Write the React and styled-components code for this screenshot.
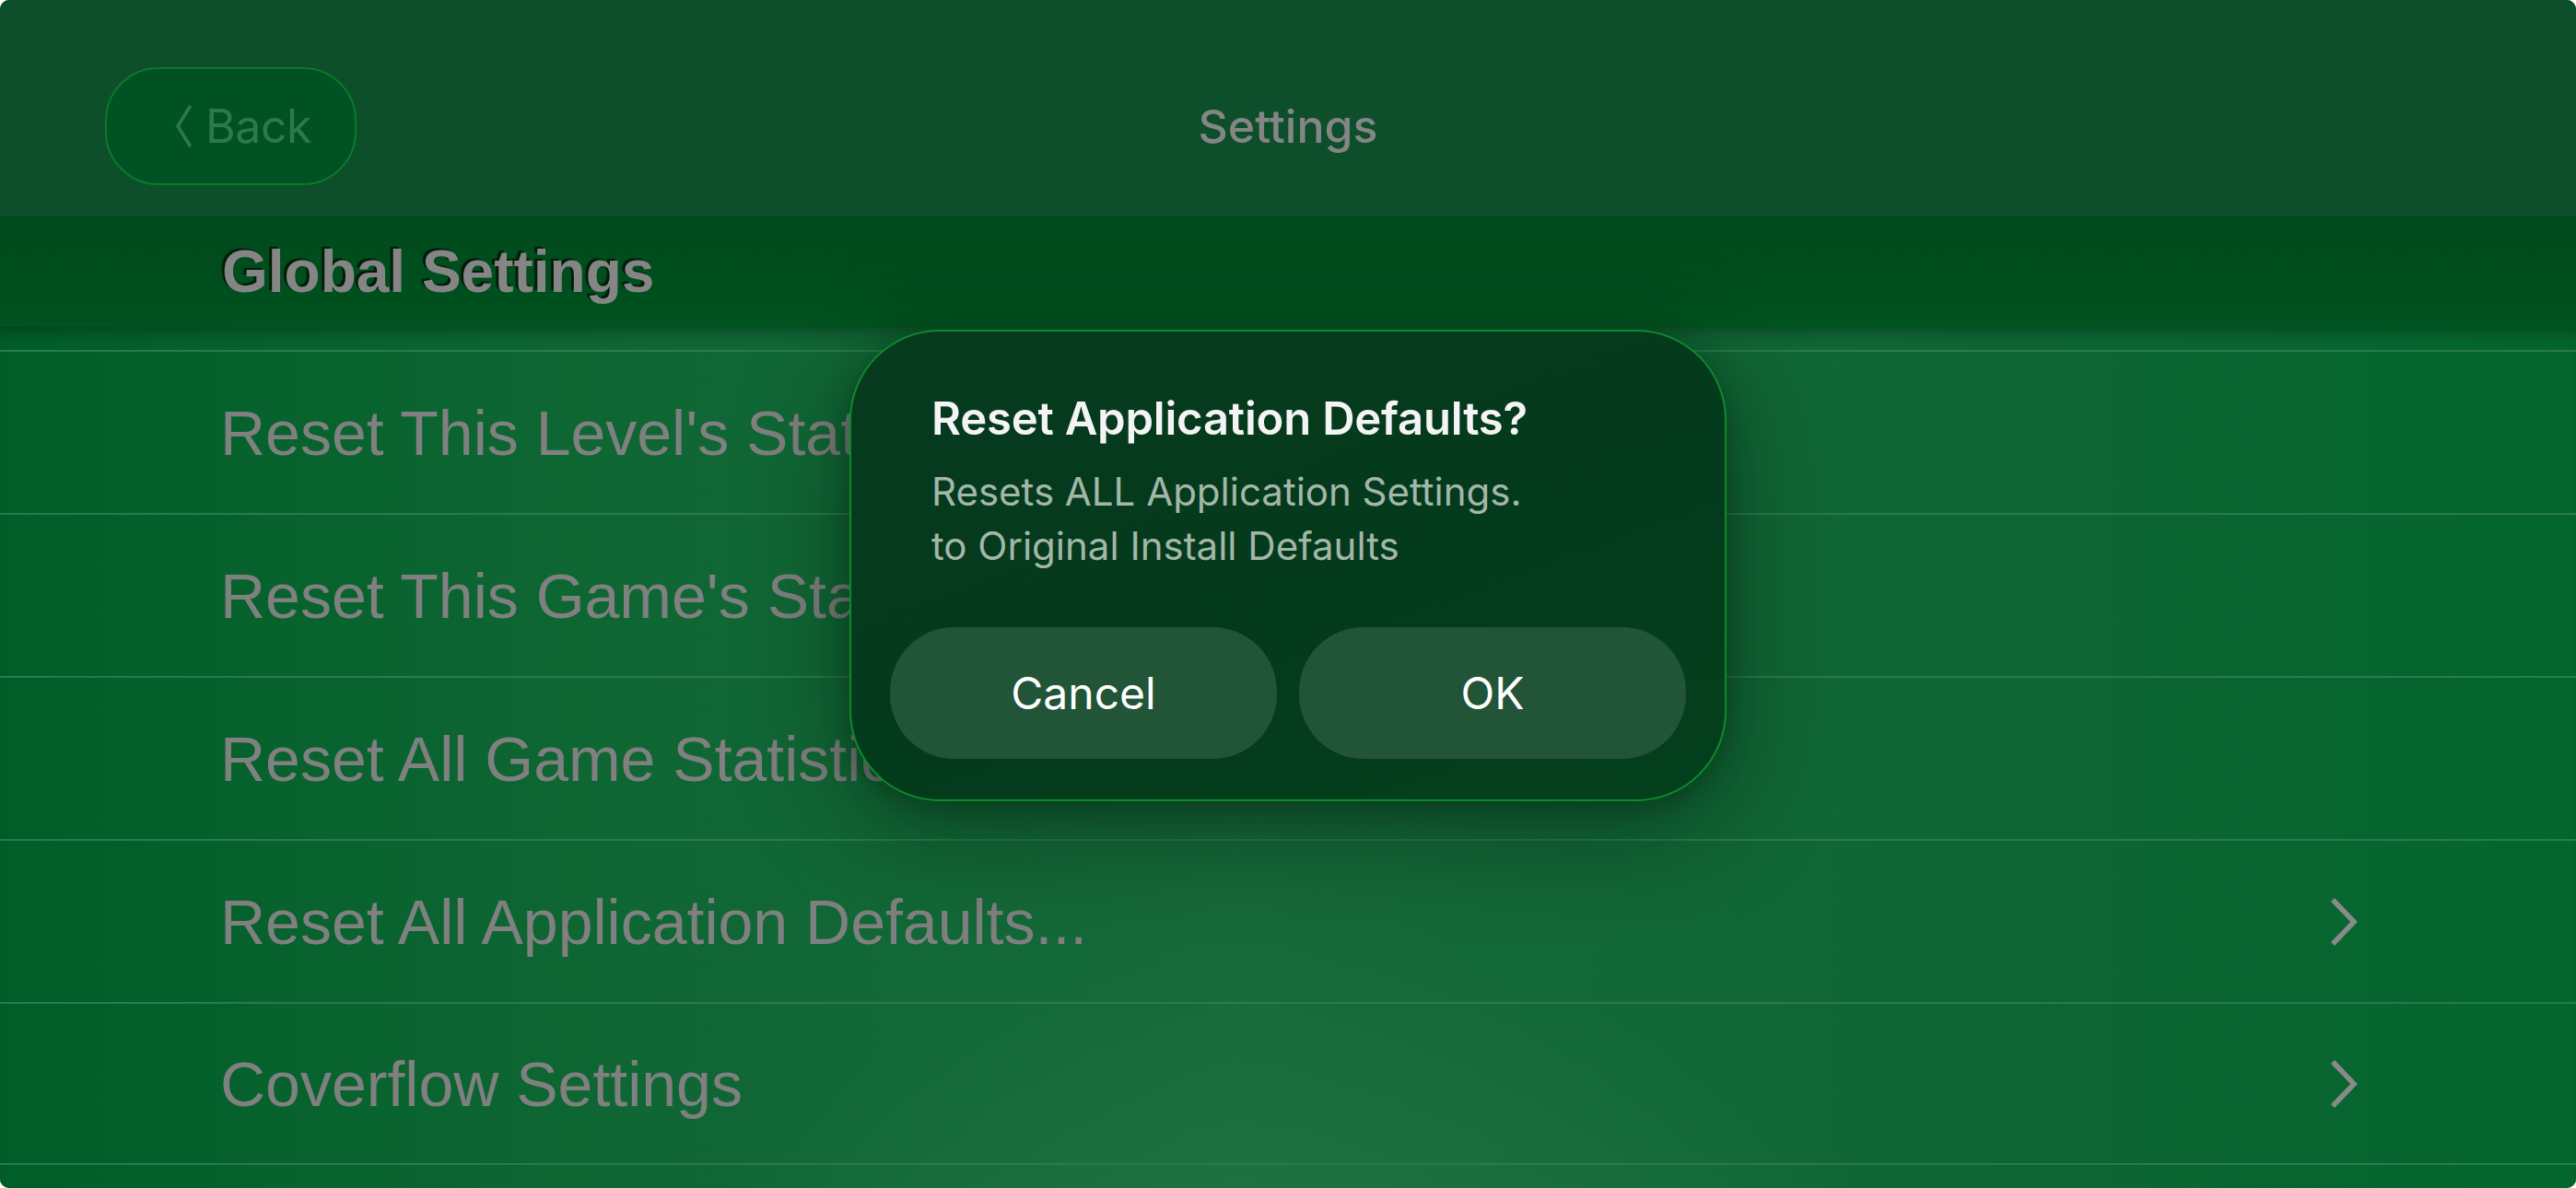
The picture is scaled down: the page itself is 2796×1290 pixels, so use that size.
import styled, { createGlobalStyle } from "styled-components";

const GlobalStyle = createGlobalStyle`
  html, body {
    margin: 0;
    padding: 0;
    background: #ffffff;
  }
  * {
    box-sizing: border-box;
  }
`;

const StyledScreen = styled.div`
  position: relative;
  width: 2796px;
  height: 1290px;
  border-radius: 10px;
  overflow: hidden;
  display: flex;
  flex-direction: column;
  background: #0e4f2b;
`;

const StyledNavBar = styled.header`
  height: 235px;
  flex-shrink: 0;
  display: grid;
  grid-template-columns: 1fr auto 1fr;
  align-items: center;
  padding: 40px 114px 0;
  background: #0e4f2b;
  border-bottom: 1px solid #0a4624;
`;

const StyledBackButton = styled.button`
  justify-self: start;
  width: 273px;
  height: 128px;
  display: flex;
  align-items: center;
  justify-content: center;
  gap: 14px;
  padding: 0 0 0 26px;
  border-radius: 58px;
  border: 2px solid #0b7a28;
  background: #005124;
  color: #2b7a4e;
  font-family: Inter, "Noto Sans", sans-serif;
  font-size: 50px;
  font-weight: 400;
  letter-spacing: -0.5px;
`;

const StyledNavTitle = styled.h1`
  margin: 0;
  font-family: Inter, "Noto Sans", sans-serif;
  font-size: 50px;
  font-weight: 500;
  color: #858585;
`;

const StyledSectionBand = styled.div`
  height: 120px;
  flex-shrink: 0;
  display: flex;
  align-items: center;
  padding-left: 241px;
  background: linear-gradient(180deg, #004a1c 0%, #004f1e 70%, #00541f 100%);
  font-family: "Liberation Sans", Arial, sans-serif;
  font-size: 64px;
  font-weight: 700;
  color: #858585;
  text-shadow: -3px -2px 1px rgba(0, 20, 5, 0.85);
`;

const StyledList = styled.ul`
  flex: 1;
  margin: 0;
  padding: 25px 0 0;
  list-style: none;
  background:
    radial-gradient(ellipse 1000px 760px at 1400px 1250px, rgba(46, 128, 80, 0.7) 0%, rgba(46, 128, 80, 0) 75%),
    linear-gradient(90deg, #005e28 0%, #0e6633 22%, #166a3a 48%, #0e6534 78%, #03662c 100%);
  box-shadow: inset 0 14px 16px -10px rgba(0, 30, 10, 0.45);
`;

const StyledRow = styled.li`
  height: 177px;
  display: flex;
  align-items: center;
  justify-content: space-between;
  padding: 0 237px 0 239px;
  border-top: 2px solid #2a7b4c;
  font-family: "Liberation Sans", Arial, sans-serif;
  font-size: 68px;
  color: #808080;
  &:last-child {
    border-bottom: 2px solid #2a7b4c;
  }
`;

const StyledOverlay = styled.div`
  position: absolute;
  inset: 0;
  display: flex;
  justify-content: center;
  align-items: flex-start;
  padding-top: 358px;
`;

const StyledDialog = styled.div`
  width: 952px;
  display: flex;
  flex-direction: column;
  padding: 66px 42px 44px;
  border-radius: 98px;
  border: 2px solid #0b8a2a;
  background: linear-gradient(160deg, #073a1f 0%, #043a1c 55%, #04401d 100%);
  box-shadow: 0 30px 120px rgba(0, 20, 8, 0.45), 0 6px 30px rgba(0, 20, 8, 0.3);
`;

const StyledDialogText = styled.div`
  padding: 0 45px;
  font-family: Inter, "Noto Sans", sans-serif;
`;

const StyledDialogTitle = styled.h2`
  margin: 0;
  font-size: 49px;
  line-height: 58px;
  font-weight: 600;
  color: #f4f4f4;
  letter-spacing: -0.2px;
`;

const StyledDialogMessage = styled.p`
  margin: 20px 0 0;
  font-size: 42px;
  line-height: 59px;
  font-weight: 400;
  color: #a3b7a9;
`;

const StyledDialogActions = styled.div`
  display: grid;
  grid-template-columns: 1fr 1fr;
  gap: 24px;
  margin-top: 59px;
`;

const StyledDialogButton = styled.button`
  height: 143px;
  border: none;
  border-radius: 70px;
  background: #225437;
  color: #ffffff;
  font-family: Inter, "Noto Sans", sans-serif;
  font-size: 48px;
  font-weight: 400;
`;

const BackChevron = () => (
  <svg width="20" height="46" viewBox="0 0 20 46" fill="none">
    <polyline
      points="17,2 4,23 17,44"
      stroke="#2b7a4e"
      strokeWidth="3.5"
      strokeLinecap="round"
      strokeLinejoin="round"
    />
  </svg>
);

const RowChevron = () => (
  <svg width="30" height="54" viewBox="0 0 30 54" fill="none">
    <polyline
      points="3,3 26,27 3,51"
      stroke="#8a8a8a"
      strokeWidth="5.5"
      strokeLinejoin="miter"
    />
  </svg>
);

const rows = [
  { label: "Reset This Level's Statistics..." },
  { label: "Reset This Game's Statistics..." },
  { label: "Reset All Game Statistics..." },
  { label: "Reset All Application Defaults...", more: true },
  { label: "Coverflow Settings", more: true },
];

const App = () => {
  return (
    <>
      <GlobalStyle />
      <StyledScreen>
        <StyledNavBar>
          <StyledBackButton>
            <BackChevron />
            Back
          </StyledBackButton>
          <StyledNavTitle>Settings</StyledNavTitle>
          <span />
        </StyledNavBar>
        <StyledSectionBand>Global Settings</StyledSectionBand>
        <StyledList>
          {rows.map((row) => (
            <StyledRow key={row.label}>
              <span>{row.label}</span>
              {row.more && <RowChevron />}
            </StyledRow>
          ))}
        </StyledList>

        <StyledOverlay>
          <StyledDialog>
            <StyledDialogText>
              <StyledDialogTitle>Reset Application Defaults?</StyledDialogTitle>
              <StyledDialogMessage>
                Resets ALL Application Settings.
                <br />
                to Original Install Defaults
              </StyledDialogMessage>
            </StyledDialogText>
            <StyledDialogActions>
              <StyledDialogButton>Cancel</StyledDialogButton>
              <StyledDialogButton>OK</StyledDialogButton>
            </StyledDialogActions>
          </StyledDialog>
        </StyledOverlay>
      </StyledScreen>
    </>
  );
};

export default App;
